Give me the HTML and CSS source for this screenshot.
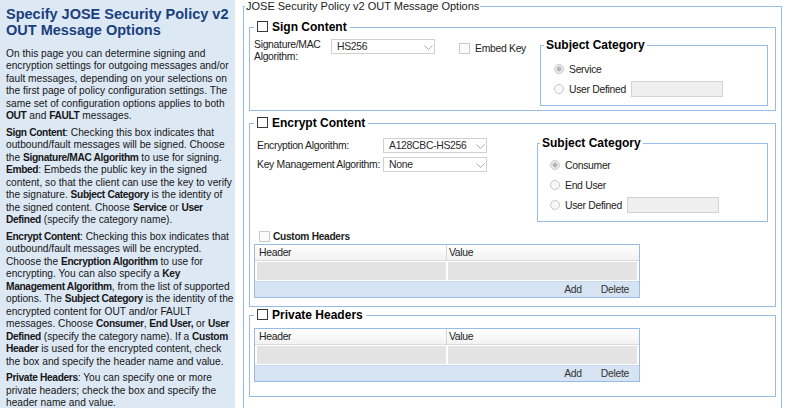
FILE: index.html
```html
<!DOCTYPE html>
<html lang="en">
<head>
<meta charset="utf-8">
<title>JOSE Security Policy v2 OUT Message Options</title>
<link rel="stylesheet" href="styles.css">
</head>
<body>
<div class="page">
  <aside class="help">
    <h1 class="help-title">Specify JOSE Security Policy v2 OUT Message Options</h1>
    <p>On this page you can determine signing and<br>encryption settings for outgoing messages and/or<br>fault messages, depending on your selections on<br>the first page of policy configuration settings. The<br>same set of configuration options applies to both<br><b>OUT</b> and <b>FAULT</b> messages.</p>
    <p><b>Sign Content</b>: Checking this box indicates that<br>outbound/fault messages will be signed. Choose<br>the <b>Signature/MAC Algorithm</b> to use for signing.<br><b>Embed</b>: Embeds the public key in the signed<br>content, so that the client can use the key to verify<br>the signature. <b>Subject Category</b> is the identity of<br>the signed content. Choose <b>Service</b> or <b>User<br>Defined</b> (specify the category name).</p>
    <p><b>Encrypt Content</b>: Checking this box indicates that<br>outbound/fault messages will be encrypted.<br>Choose the <b>Encryption Algorithm</b> to use for<br>encrypting. You can also specify a <b>Key<br>Management Algorithm</b>, from the list of supported<br>options. The <b>Subject Category</b> is the identity of the<br>encrypted content for OUT and/or FAULT<br>messages. Choose <b>Consumer</b>, <b>End User,</b> or <b>User<br>Defined</b> (specify the category name). If a <b>Custom<br>Header</b> is used for the encrypted content, check<br>the box and specify the header name and value.</p>
    <p><b>Private Headers</b>: You can specify one or more<br>private headers; check the box and specify the<br>header name and value.</p>
  </aside>
  <main class="main">
    <fieldset class="box box-outer">
      <legend class="outer-legend">JOSE Security Policy v2 OUT Message Options</legend>

      <fieldset class="box section section-sign">
        <legend class="section-legend"><input type="checkbox" class="check"><span>Sign Content</span></legend>
        <div class="sign-body">
          <div class="field-label sign-label">Signature/MAC Algorithm:</div>
          <div class="select select-sign"><span>HS256</span><svg class="chev" width="9" height="5" viewBox="0 0 9 5"><polyline points="0.5,0.5 4.5,4.5 8.5,0.5" fill="none" stroke="#adadad" stroke-width="1"/></svg></div>
          <label class="embed"><input type="checkbox" class="check" disabled><span>Embed Key</span></label>
          <fieldset class="box subject subject-sign">
            <legend class="subject-legend">Subject Category</legend>
            <div class="radio-row"><input type="radio" name="s1" class="radio" checked disabled><span>Service</span></div>
            <div class="radio-row"><input type="radio" name="s1" class="radio" disabled><span>User Defined</span><input type="text" class="text-field" disabled></div>
          </fieldset>
        </div>
      </fieldset>

      <fieldset class="box section section-encrypt">
        <legend class="section-legend"><input type="checkbox" class="check"><span>Encrypt Content</span></legend>
        <div class="encrypt-body">
          <div class="encrypt-fields">
            <div class="field-row">
              <div class="field-label">Encryption Algorithm:</div>
              <div class="select"><span>A128CBC-HS256</span><svg class="chev" width="9" height="5" viewBox="0 0 9 5"><polyline points="0.5,0.5 4.5,4.5 8.5,0.5" fill="none" stroke="#adadad" stroke-width="1"/></svg></div>
            </div>
            <div class="field-row">
              <div class="field-label">Key Management Algorithm:</div>
              <div class="select"><span>None</span><svg class="chev" width="9" height="5" viewBox="0 0 9 5"><polyline points="0.5,0.5 4.5,4.5 8.5,0.5" fill="none" stroke="#adadad" stroke-width="1"/></svg></div>
            </div>
          </div>
          <fieldset class="box subject subject-encrypt">
            <legend class="subject-legend">Subject Category</legend>
            <div class="radio-row"><input type="radio" name="s2" class="radio" checked disabled><span>Consumer</span></div>
            <div class="radio-row"><input type="radio" name="s2" class="radio" disabled><span>End User</span></div>
            <div class="radio-row"><input type="radio" name="s2" class="radio" disabled><span>User Defined</span><input type="text" class="text-field" disabled></div>
          </fieldset>
        </div>
        <label class="custom-row"><input type="checkbox" class="check" disabled><span>Custom Headers</span></label>
        <div class="grid">
          <div class="grid-head"><span>Header</span><span>Value</span></div>
          <div class="grid-data"><div class="grid-cell"></div><div class="grid-cell"></div></div>
          <div class="grid-foot"><span>Add</span><span>Delete</span></div>
        </div>
      </fieldset>

      <fieldset class="box section section-private">
        <legend class="section-legend"><input type="checkbox" class="check"><span>Private Headers</span></legend>
        <div class="grid">
          <div class="grid-head"><span>Header</span><span>Value</span></div>
          <div class="grid-data"><div class="grid-cell"></div><div class="grid-cell"></div></div>
          <div class="grid-foot"><span>Add</span><span>Delete</span></div>
        </div>
      </fieldset>
    </fieldset>
  </main>
</div>
</body>
</html>
```

FILE: styles.css
```css
* { box-sizing: border-box; }

html, body {
  margin: 0;
  padding: 0;
}

body {
  width: 786px;
  height: 408px;
  overflow: hidden;
  background: #fff;
  color: #1b1b1b;
  font-family: "Liberation Sans", Arial, sans-serif;
}

.page {
  display: flex;
  height: 408px;
}

/* ---------- help sidebar ---------- */
.help {
  flex: 0 0 235px;
  background: #dde8f5;
  padding: 5.5px 0 0 6px;
  overflow: hidden;
}

.help-title {
  margin: 0 0 9px;
  font-size: 14.5px;
  line-height: 16.7px;
  font-weight: bold;
  color: #1a3f7c;
}

.help p {
  margin: 0 0 4px;
  font-size: 10.2px;
  line-height: 12.5px;
  white-space: nowrap;
  color: #161616;
}

.help b {
  letter-spacing: -0.35px;
}

/* ---------- main form ---------- */
.main {
  flex: 1;
  min-width: 0;
  padding: 0 4px 0 8px;
}

.box {
  margin: 0;
  border: 1px solid #99bbe8;
  min-width: 0;
}

.box-outer {
  padding: 8px 5px 30px 5px;
}

.outer-legend {
  margin-left: -4px;
  padding: 0 1px;
  font-size: 11px;
  line-height: 13px;
  color: #1b1b1b;
}

.section {
  padding: 5px 7px 4px 4px;
}

.section-encrypt {
  margin-top: 6px;
  padding: 8px 7px 8px 4px;
}

.section-private {
  margin-top: 2px;
  padding: 6px 7px 14px 4px;
}

.section-legend {
  padding: 0 3px;
  font-size: 12px;
  line-height: 13px;
  font-weight: bold;
  color: #000;
  white-space: nowrap;
}

.check {
  -webkit-appearance: none;
  appearance: none;
  width: 11px;
  height: 11px;
  margin: 0 4px 0 0;
  border: 1px solid #3a3a3a;
  border-radius: 0;
  background: #fff;
  vertical-align: top;
}

.check:disabled {
  border-color: #c9c9c9;
  background: #fbfbfb;
}

.field-label {
  font-size: 10.4px;
  letter-spacing: -0.3px;
  line-height: 12px;
  color: #222;
}

/* sign content */
.sign-body {
  display: flex;
  align-items: flex-start;
}

.sign-label {
  width: 77px;
}

.select {
  display: flex;
  align-items: center;
  justify-content: space-between;
  width: 104px;
  height: 15px;
  padding: 0 1px 0 5px;
  border: 1px solid #d0d0d0;
  background: #fff;
  font-size: 10.4px;
  letter-spacing: -0.3px;
  color: #2a2a2a;
}

.chev {
  display: block;
  margin-top: 1px;
}

.embed {
  display: flex;
  align-items: center;
  height: 12px;
  margin: 3px 0 0 24px;
  font-size: 10.4px;
  letter-spacing: -0.3px;
  color: #222;
}

.embed .check {
  margin-right: 5px;
}

/* subject category */
.subject {
  margin-left: auto;
  padding: 9px 8px 8px 13px;
}

.subject-sign {
  width: 228px;
}

.subject-encrypt {
  width: 231px;
  margin-top: -1px;
  padding: 7px 8px 8px 12px;
}

.subject-legend {
  margin-left: -10px;
  padding: 0 2px;
  font-size: 12px;
  line-height: 13px;
  font-weight: bold;
  color: #000;
}

.radio-row {
  display: flex;
  align-items: center;
  height: 16px;
  font-size: 10.4px;
  letter-spacing: -0.3px;
  color: #222;
}

.radio-row + .radio-row {
  margin-top: 4px;
}

.radio {
  -webkit-appearance: none;
  appearance: none;
  width: 10px;
  height: 10px;
  margin: 0 5px 0 0;
  border: 1px solid #c8c8c8;
  border-radius: 50%;
  background: #f8f8f8;
}

.radio:checked {
  background: radial-gradient(circle, #b0b0b0 0, #b8b8b8 2px, #ececec 3px, #f6f6f6 5px);
}

.text-field {
  width: 92px;
  height: 16px;
  margin: 0 0 0 5px;
  padding: 0;
  border: 1px solid #d3d3d3;
  background: #efefef;
}

/* encrypt content */
.encrypt-body {
  display: flex;
  align-items: flex-start;
}

.encrypt-fields {
  display: flex;
  flex-direction: column;
  gap: 4px;
  margin-left: 3px;
}

.field-row {
  display: flex;
  align-items: center;
  height: 15px;
}

.field-row .field-label {
  width: 126px;
}

.custom-row {
  display: flex;
  align-items: center;
  height: 12px;
  margin: 8px 0 2px;
  padding-left: 5px;
  font-size: 10.2px;
  letter-spacing: -0.3px;
  font-weight: bold;
  color: #222;
}

.custom-row .check {
  margin-right: 3px;
}

/* grids */
.grid {
  width: 386px;
  border: 1px solid #99bbe8;
  font-size: 10.4px;
  letter-spacing: -0.3px;
  color: #222;
}

.grid-head {
  display: grid;
  grid-template-columns: 191px 1fr;
  height: 16px;
  border-bottom: 1px solid #dadada;
  background: linear-gradient(#ffffff, #f2f2f2);
  line-height: 15px;
}

.grid-head span {
  padding-left: 4px;
}

.grid-head span + span {
  padding-left: 2px;
  border-left: 1px solid #d6d6d6;
}

.grid-data {
  display: grid;
  grid-template-columns: 189px 189px;
  gap: 2px;
  height: 20px;
  padding: 1px 2px;
  background: #fff;
}

.grid-cell {
  background: #e3e3e3;
}

.grid-foot {
  display: flex;
  align-items: center;
  justify-content: flex-end;
  gap: 19px;
  height: 16px;
  padding-right: 10px;
  border-top: 1px solid #c8d8ec;
  background: #d6e3f2;
  color: #333;
}
```
